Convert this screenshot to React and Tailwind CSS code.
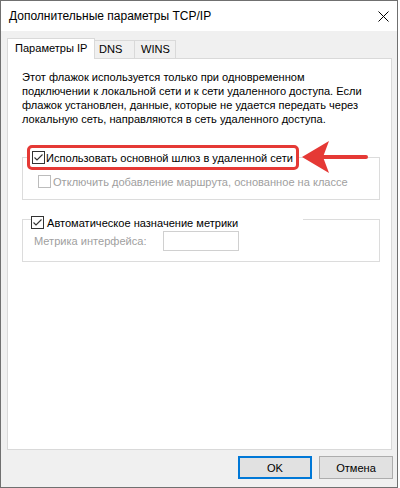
import React from "react";

function Check({ disabled = false, checked = false }) {
  return (
    <span
      className={
        "w-[13px] h-[13px] shrink-0 border bg-white flex items-center justify-center " +
        (disabled ? "border-[#bcbcbc]" : "border-[#333333]")
      }
    >
      {checked && (
        <svg width="11" height="11" viewBox="0 0 11 11">
          <path d="M1.5 5.5 L4 8 L9.5 2.5" fill="none" stroke="#333333" strokeWidth="1.1" />
        </svg>
      )}
    </span>
  );
}

export default function App() {
  return (
    <div className="w-[400px] h-[488px] bg-white font-['Liberation_Sans',Arial,sans-serif] text-[11.07px] text-black whitespace-nowrap">
      <div className="w-[398px] h-[488px] border border-[#707070] bg-[#f0f0f0] flex flex-col">
        {/* Title bar */}
        <div className="h-[30px] bg-white flex items-center justify-between pl-[8px] pr-[8px]">
          <span className="text-[12px] leading-[14px]">Дополнительные параметры TCP/IP</span>
          <svg width="11" height="11" viewBox="0 0 11 11">
            <path d="M0.5 0.5 L10.5 10.5 M10.5 0.5 L0.5 10.5" stroke="#000" strokeWidth="1" />
          </svg>
        </div>

        {/* Body */}
        <div className="flex-1 flex flex-col pt-[7px] pl-[6px] pr-[4px]">
          {/* Tabs */}
          <div className="flex items-end h-[20px]">
            <div className="relative z-10 -mb-px h-[21px] w-[88px] bg-white border-l border-t border-r border-[#d9d9d9] flex items-center pl-[7px] pb-[1px]">
              Параметры IP
            </div>
            <div className="h-[18px] w-[40px] border-t border-r border-[#d9d9d9] flex items-center pl-[4px]">
              DNS
            </div>
            <div className="h-[18px] w-[41px] border-t border-r border-[#d9d9d9] flex items-center pl-[6px]">
              WINS
            </div>
          </div>

          {/* Panel */}
          <div className="relative h-[392px] w-[385px] bg-white border border-[#d9d9d9] px-[14px] pt-[11px] flex flex-col items-start">
            <p className="leading-[14px]">
              Этот флажок используется только при одновременном
              <br />
              подключении к локальной сети и к сети удаленного доступа. Если
              <br />
              флажок установлен, данные, которые не удается передать через
              <br />
              локальную сеть, направляются в сеть удаленного доступа.
            </p>

            {/* Group 1 */}
            <div className="mt-[31px] w-[358px] border border-[#dcdcdc] pb-[11px] flex flex-col items-start">
              <div className="-mt-[13px] ml-[4px] h-[25px] w-[272px] bg-white border-[3px] border-[#e53935] rounded-[5px] flex items-center pl-[2px] gap-[1px]">
                <Check checked />
                <span className="leading-[14px]">Использовать основной шлюз в удаленной сети</span>
              </div>
              <div className="mt-[5px] ml-[15px] h-[13px] flex items-center gap-[2px] text-[#a0a0a0]">
                <Check disabled />
                <span className="leading-[14px]">Отключить добавление маршрута, основанное на классе</span>
              </div>
            </div>

            {/* Group 2 */}
            <div className="mt-[19px] w-[358px] border border-[#dcdcdc] pb-[10px] flex flex-col items-start">
              <div className="-mt-[4px] ml-[8px] h-[13px] w-[272px] bg-white flex items-center gap-[3px]">
                <Check checked />
                <span className="leading-[14px]">Автоматическое назначение метрики</span>
              </div>
              <div className="mt-[2px] ml-[11px] h-[20px] flex items-center text-[#a0a0a0]">
                <span className="w-[129px] leading-[14px]">Метрика интерфейса:</span>
                <div className="w-[76px] h-[20px] border border-[#d0d0d0] bg-white" />
              </div>
            </div>

            {/* Annotation arrow */}
            <svg
              className="absolute left-[287px] top-[76px]"
              width="80"
              height="45"
              viewBox="0 0 80 45"
            >
              <path d="M27 22 L71 22" stroke="#e53935" strokeWidth="4" strokeLinecap="round" />
              <path d="M7 22 L34 6 L28 22 L34 38 Z" fill="#e53935" />
            </svg>
          </div>

          {/* Buttons */}
          <div className="mt-[6px] flex justify-end gap-[7px]">
            <button className="w-[74px] h-[23px] bg-[#e1e1e1] border-2 border-[#0078d7] leading-[14px]">
              OK
            </button>
            <button className="w-[74px] h-[23px] bg-[#e1e1e1] border border-[#adadad] leading-[14px]">
              Отмена
            </button>
          </div>
        </div>
      </div>
    </div>
  );
}
